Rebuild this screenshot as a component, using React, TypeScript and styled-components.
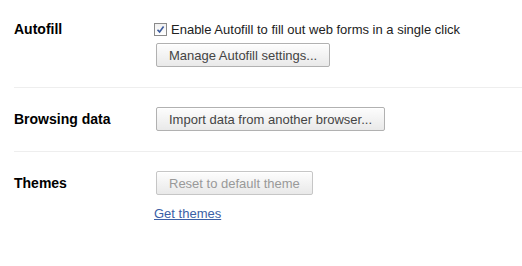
import React from "react";
import styled, { createGlobalStyle } from "styled-components";

const Global = createGlobalStyle`
  html, body { margin: 0; padding: 0; background: #fff; }
  body { font-family: "Liberation Sans", Arial, sans-serif; font-size: 13px; color: #000; }
`;

const Page = styled.div`
  width: 522px;
  padding-top: 17px;
`;

const Section = styled.section<{ $first?: boolean }>`
  display: grid;
  grid-template-columns: 142px 1fr;
  margin-left: 14px;
  padding: ${(p) => (p.$first ? "0 0 20px" : "19px 0 20px")};
  border-top: ${(p) => (p.$first ? "none" : "1px solid #eeeeee")};
`;

const Label = styled.h3`
  margin: 0;
  font-size: 14px;
  font-weight: bold;
  line-height: 24px;
  color: #000;
`;

const Controls = styled.div`
  display: flex;
  flex-direction: column;
  align-items: flex-start;
  gap: 2px;
`;

const CheckRow = styled.label`
  display: flex;
  align-items: center;
  height: 24px;
  color: #222;
  font-size: 13px;
`;

const Box = styled.span`
  width: 11px;
  height: 11px;
  margin: 0 4px 0 -2px;
  border: 1px solid #8a8a8a;
  background: linear-gradient(#f0f0f0, #ffffff);
  display: flex;
  align-items: center;
  justify-content: center;
`;

const Button = styled.button<{ $disabled?: boolean }>`
  height: 24px;
  padding: 0 12px;
  border: 1px solid ${(p) => (p.$disabled ? "#c6c6c6" : "#b1b1b1")};
  border-radius: 2px;
  background: linear-gradient(#fdfdfd, #e9e9e9);
  box-shadow: inset 0 1px 0 #ffffff;
  font-family: "Liberation Sans", Arial, sans-serif;
  font-size: 13px;
  color: ${(p) => (p.$disabled ? "#999999" : "#444444")};
  cursor: default;
`;

const Link = styled.a`
  margin-top: 9px;
  margin-left: -2px;
  font-size: 13px;
  line-height: 16px;
  color: #3c5fa6;
  text-decoration: underline;
`;

export default function App() {
  return (
    <>
      <Global />
      <Page>
        <Section $first>
          <Label>Autofill</Label>
          <Controls>
            <CheckRow>
              <Box>
                <svg width="9" height="9" viewBox="0 0 9 9">
                  <path d="M1.5 4.8 L3.6 7 L7.6 1.5" fill="none" stroke="#3b5a9c" strokeWidth="1.6" />
                </svg>
              </Box>
              Enable Autofill to fill out web forms in a single click
            </CheckRow>
            <Button>Manage Autofill settings...</Button>
          </Controls>
        </Section>
        <Section>
          <Label>Browsing data</Label>
          <Controls>
            <Button>Import data from another browser...</Button>
          </Controls>
        </Section>
        <Section>
          <Label>Themes</Label>
          <Controls>
            <Button $disabled>Reset to default theme</Button>
            <Link href="#">Get themes</Link>
          </Controls>
        </Section>
      </Page>
    </>
  );
}
